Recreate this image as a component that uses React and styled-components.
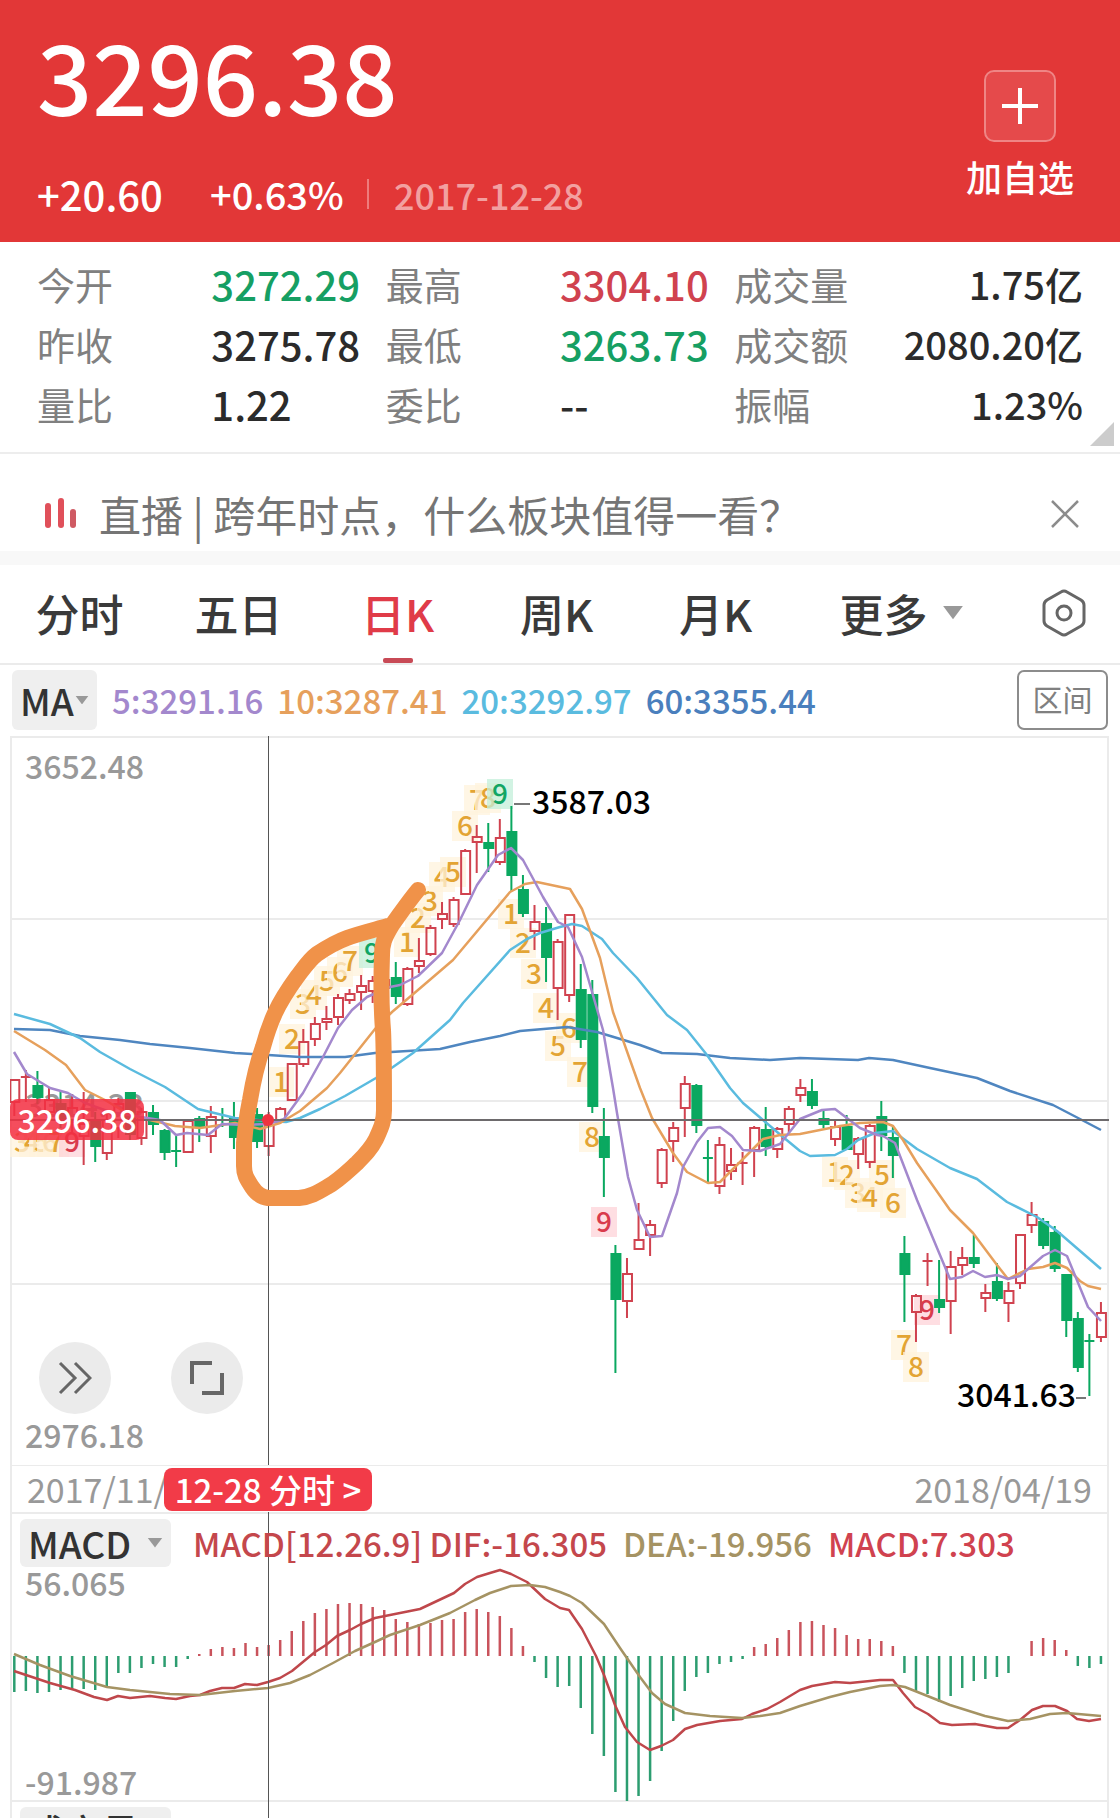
import React from 'react'
import styled, { createGlobalStyle } from 'styled-components'

const RED = '#d0424f';
const GREEN = '#0aa860';

// x of the n-th trading day in chart units
const dayX = (i) => 14.3 + 11.56 * i;

// colour, body top, body bottom, high, low
const candles = [
    ['r', 1080, 1102, 1080, 1116],
    ['r', 1077, 1077, 1070, 1102],
    ['g', 1086, 1097, 1071, 1104],
    ['r', 1100, 1112, 1087, 1120],
    ['g', 1104, 1118, 1090, 1128],
    ['r', 1108, 1122, 1094, 1132],
    ['r', 1124, 1136, 1092, 1165],
    ['g', 1122, 1146, 1112, 1162],
    ['r', 1120, 1153, 1112, 1160],
    ['r', 1104, 1128, 1098, 1138],
    ['g', 1093, 1134, 1093, 1140],
    ['r', 1112, 1138, 1108, 1145],
    ['g', 1113, 1124, 1105, 1135],
    ['g', 1131, 1152, 1129, 1160],
    ['g', 1151, 1151, 1135, 1167],
    ['r', 1121, 1152, 1120, 1153],
    ['g', 1119, 1127, 1116, 1142],
    ['r', 1117, 1136, 1106, 1153],
    ['g', 1120, 1120, 1108, 1127],
    ['g', 1119, 1137, 1102, 1149],
    ['r', 1120, 1132, 1112, 1140],
    ['g', 1115, 1141, 1108, 1148],
    ['r', 1125, 1146, 1112, 1156],
    ['r', 1109, 1122, 1107, 1124],
    ['r', 1064, 1100, 1064, 1100],
    ['r', 1042, 1064, 1029, 1067],
    ['r', 1024, 1039, 1017, 1046],
    ['r', 1019, 1022, 1006, 1030],
    ['r', 998, 1017, 994, 1025],
    ['r', 994, 1000, 989, 1004],
    ['r', 986, 992, 975, 1010],
    ['r', 981, 991, 976, 1003],
    ['r', 980, 988, 974, 996],
    ['g', 978, 996, 962, 1004],
    ['r', 969, 1004, 967, 1006],
    ['r', 961, 966, 938, 973],
    ['r', 928, 954, 925, 956],
    ['r', 914, 919, 902, 929],
    ['r', 900, 924, 897, 927],
    ['r', 851, 894, 849, 895],
    ['r', 837, 842, 825, 873],
    ['g', 843, 848, 823, 872],
    ['r', 838, 862, 819, 865],
    ['g', 832, 875, 806, 891],
    ['g', 890, 913, 875, 917],
    ['r', 922, 931, 905, 950],
    ['g', 924, 957, 907, 982],
    ['r', 942, 988, 939, 1020],
    ['r', 915, 995, 915, 1002],
    ['g', 990, 1039, 964, 1048],
    ['g', 995, 1106, 980, 1113],
    ['g', 1137, 1157, 1108, 1197],
    ['g', 1254, 1299, 1245, 1373],
    ['r', 1274, 1301, 1258, 1318],
    ['r', 1240, 1249, 1203, 1249],
    ['r', 1225, 1235, 1220, 1256],
    ['r', 1150, 1183, 1148, 1188],
    ['r', 1128, 1141, 1122, 1162],
    ['r', 1084, 1108, 1076, 1137],
    ['g', 1086, 1125, 1084, 1133],
    ['g', 1158, 1158, 1140, 1183],
    ['r', 1145, 1186, 1137, 1194],
    ['r', 1165, 1171, 1148, 1180],
    ['r', 1163, 1163, 1152, 1185],
    ['r', 1128, 1150, 1126, 1177],
    ['g', 1130, 1146, 1107, 1156],
    ['r', 1129, 1149, 1127, 1158],
    ['r', 1109, 1124, 1106, 1133],
    ['r', 1088, 1095, 1079, 1102],
    ['g', 1092, 1105, 1079, 1109],
    ['g', 1119, 1124, 1111, 1128],
    ['r', 1127, 1139, 1120, 1146],
    ['g', 1127, 1149, 1115, 1149],
    ['r', 1139, 1154, 1137, 1169],
    ['r', 1126, 1162, 1124, 1168],
    ['g', 1117, 1135, 1101, 1151],
    ['g', 1138, 1155, 1125, 1178],
    ['g', 1254, 1274, 1236, 1322],
    ['r', 1296, 1312, 1294, 1342],
    ['r', 1261, 1261, 1253, 1286],
    ['g', 1300, 1307, 1260, 1313],
    ['r', 1267, 1301, 1251, 1334],
    ['r', 1258, 1265, 1247, 1275],
    ['g', 1258, 1263, 1235, 1268],
    ['r', 1293, 1298, 1284, 1312],
    ['g', 1282, 1298, 1263, 1301],
    ['r', 1291, 1303, 1282, 1322],
    ['r', 1235, 1283, 1235, 1289],
    ['r', 1215, 1225, 1202, 1233],
    ['g', 1222, 1245, 1218, 1249],
    ['g', 1233, 1268, 1226, 1272],
    ['g', 1275, 1320, 1274, 1337],
    ['g', 1319, 1367, 1312, 1372],
    ['g', 1341, 1341, 1334, 1396],
    ['r', 1313, 1337, 1302, 1342],
];

const averages = [
    {
        color: '#4f86c0',
        points: '14,1029 50,1030 80,1036 120,1040 150,1044 190,1048 235,1053 268,1055 300,1057 345,1057 375,1053 440,1049 470,1042 500,1036 520,1031 567,1027 597,1032 617,1038 640,1045 662,1053 697,1054 730,1058 770,1060 800,1058 858,1060 869,1058 893,1060 930,1068 977,1078 1010,1091 1053,1105 1080,1119 1101,1130',
    },
    {
        color: '#5abbdf',
        points: '14,1014 50,1024 80,1038 100,1052 130,1069 165,1087 198,1109 235,1118 268,1121 286,1122 300,1118 320,1109 345,1096 376,1078 393,1067 413,1053 450,1020 463,1003 510,950 527,939 540,933 560,927 572,924 582,926 602,939 613,953 637,978 667,1015 687,1030 707,1055 730,1088 743,1103 763,1120 783,1137 800,1151 810,1156 835,1155 847,1149 858,1140 875,1133 893,1131 917,1149 950,1168 977,1179 1007,1202 1037,1217 1057,1231 1101,1269',
    },
    {
        color: '#e6a05c',
        points: '14,1031 45,1050 66,1065 85,1090 105,1100 130,1115 150,1120 175,1126 200,1128 235,1123 260,1129 280,1123 300,1111 327,1088 340,1073 375,1029 392,1012 418,990 453,960 510,892 525,884 537,882 570,889 582,909 600,958 613,1012 640,1088 652,1118 673,1153 687,1172 708,1183 720,1182 732,1170 747,1155 763,1139 780,1135 800,1134 820,1130 840,1126 860,1123 883,1122 893,1126 903,1140 917,1163 950,1210 973,1233 997,1265 1008,1279 1028,1269 1043,1267 1055,1263 1067,1268 1080,1281 1088,1286 1101,1289',
    },
    {
        color: '#a388cd',
        points: '14,1052 27,1074 50,1088 68,1093 85,1103 110,1112 160,1120 176,1135 187,1133 208,1135 222,1124 245,1125 268,1124 284,1119 303,1093 323,1057 338,1028 352,1010 367,997 390,987 400,985 418,976 442,953 460,920 477,885 498,855 511,848 523,860 543,897 558,922 568,927 582,957 603,1030 613,1088 617,1113 628,1177 637,1210 650,1237 662,1236 677,1193 683,1167 697,1142 708,1128 720,1127 732,1136 743,1150 760,1151 780,1144 800,1119 822,1110 835,1109 860,1128 877,1135 883,1136 895,1143 917,1200 950,1279 962,1277 973,1271 985,1277 997,1275 1008,1279 1020,1276 1043,1256 1055,1250 1067,1256 1088,1307 1101,1321',
    },
];

// digit, centre x, centre y, kind
const marks = [
    ['3', 22, 1142], ['4', 32, 1142],
    ['5', 42, 1142], ['6', 50, 1142], ['7', 56, 1142], ['9', 72, 1142, 'low'],
    ['1', 281, 1082], ['2', 292, 1039], ['3', 303, 1004], ['4', 314, 995],
    ['5', 327, 981], ['6', 340, 972], ['7', 350, 961], ['9', 372, 953, 'high'],
    ['1', 407, 942], ['2', 418, 918], ['3', 430, 901], ['4', 442, 877],
    ['5', 453, 872], ['6', 465, 826], ['7', 477, 800], ['8', 488, 798], ['9', 500, 794, 'high'],
    ['1', 511, 914], ['2', 523, 943], ['3', 534, 974], ['4', 546, 1008],
    ['5', 558, 1046], ['6', 569, 1028], ['7', 580, 1072], ['8', 592, 1137], ['9', 604, 1222, 'low'],
    ['1', 835, 1172], ['2', 847, 1175], ['3', 858, 1193], ['4', 870, 1197],
    ['5', 882, 1175], ['6', 893, 1203], ['7', 904, 1345], ['8', 916, 1367], ['9', 927, 1310, 'low'],
];

const markColors = {
    count: { text: '#e3a434', back: '#fff3dc' },
    high: { text: '#12a564', back: '#c3efd9' },
    low: { text: '#d93b4c', back: '#fdd3d8' },
};

// end of every MACD bar, the zero line is at 1656
const macdBars = [
    1692, 1691, 1693, 1692, 1690, 1689, 1689, 1690, 1686, 1673, 1673, 1668, 1664, 1667, 1667, 1659,
    1654, 1649, 1647, 1648, 1643, 1647, 1645, 1640, 1631, 1621, 1613, 1609, 1604, 1603, 1604, 1607,
    1610, 1619, 1622, 1624, 1623, 1620, 1619, 1612, 1609, 1612, 1616, 1628, 1646, 1662, 1678, 1687,
    1686, 1708, 1734, 1756, 1792, 1801, 1796, 1781, 1751, 1721, 1691, 1677, 1673, 1664, 1662, 1659,
    1647, 1644, 1638, 1630, 1622, 1621, 1625, 1628, 1635, 1639, 1639, 1641, 1646, 1673, 1691, 1694,
    1702, 1696, 1688, 1681, 1679, 1677, 1673, 1656, 1641, 1638, 1640, 1650, 1666, 1668, 1664,
];

const difPoints = '14,1671 26,1675 50,1683 75,1690 94,1697 107,1700 118,1696 130,1698 150,1696 165,1698 176,1699 190,1696 200,1695 210,1691 222,1688 234,1688 245,1684 257,1685 268,1682 280,1678 292,1671 315,1652 326,1645 337,1636 350,1630 361,1624 375,1618 395,1614 420,1609 437,1601 454,1593 465,1584 477,1577 490,1573 500,1570 511,1574 527,1582 545,1599 560,1608 569,1610 582,1629 596,1656 604,1675 615,1705 625,1727 637,1742 650,1750 661,1746 673,1740 685,1729 697,1725 720,1721 742,1719 752,1714 767,1709 780,1702 800,1690 812,1686 835,1682 850,1683 870,1681 880,1680 893,1680 903,1693 915,1707 928,1714 940,1723 952,1725 975,1724 997,1728 1008,1728 1020,1720 1032,1710 1043,1706 1055,1706 1067,1711 1077,1719 1089,1721 1101,1719';
const deaPoints = '14,1654 40,1665 70,1676 107,1687 130,1690 170,1694 200,1695 235,1691 268,1688 290,1683 310,1675 333,1663 355,1651 375,1642 390,1635 420,1625 450,1613 475,1600 490,1593 511,1586 530,1585 545,1587 560,1592 570,1596 582,1603 604,1624 620,1648 640,1677 652,1693 665,1704 685,1713 710,1716 742,1718 760,1716 780,1713 800,1706 830,1697 850,1692 880,1686 893,1685 905,1687 930,1697 950,1705 985,1716 1008,1721 1030,1719 1050,1714 1067,1713 1101,1716';

const stats = [
    ['今开', '3272.29', 'down', '最高', '3304.10', 'up', '成交量', '1.75亿'],
    ['昨收', '3275.78', '', '最低', '3263.73', 'down', '成交额', '2080.20亿'],
    ['量比', '1.22', '', '委比', '--', '', '振幅', '1.23%'],
];

const maValues = [
    ['5:3291.16', '#a388cd'],
    ['10:3287.41', '#e6a05c'],
    ['20:3292.97', '#5abbdf'],
    ['60:3355.44', '#4a7fbd'],
];

const Candle = ({ x, data }) => {
    const [kind, top, bottom, high, low] = data;
    const color = kind === 'r' ? RED : GREEN;
    return (
        <g stroke={color} strokeWidth="2" fill="none">
            <path d={`M${x} ${high}V${top}M${x} ${bottom}V${low}`} />
            {top === bottom
                ? <path d={`M${x - 5} ${top}H${x + 5}`} />
                : <rect x={x - 4} y={top} width="9" height={bottom - top} fill={kind === 'g' ? color : 'none'} />}
        </g>
    )
}

const Mark = ({ digit, x, y, kind = 'count' }) => (
    <g>
        <rect x={x - 13} y={y - 15} width="26" height="30" fill={markColors[kind].back} opacity="0.75" />
        <MarkText x={x} y={y + 10} fill={markColors[kind].text}>{digit}</MarkText>
    </g>
)

const Caret = ({ size }) => (
    <CaretIcon viewBox="0 0 20 12" width={size} aria-hidden="true">
        <path d="M1 0H19L10 12Z" fill="#999" />
    </CaretIcon>
)

const PriceChart = () => (
    <ChartSvg viewBox="10 736 1099 729">
        <g stroke="#ebebeb" strokeWidth="2" fill="none">
            <path d="M10 737H1109M10 919H1109M10 1101H1109M10 1284H1109" />
            <path d="M11 736V1465M1108 736V1465" />
        </g>
        <GhostText x="25" y="1117">3314.33</GhostText>
        {marks.map(([digit, x, y, kind], i) => <Mark key={i} digit={digit} x={x} y={y} kind={kind} />)}
        {candles.map((c, i) => <Candle key={i} x={dayX(i)} data={c} />)}
        {averages.map(a => (
            <polyline key={a.color} points={a.points} fill="none" stroke={a.color} strokeWidth="2.5" strokeLinejoin="round" />
        ))}
        <path d="M514 804H530M1076 1398H1086" stroke="#777" strokeWidth="2" />
        <ExtremeText x="532" y="814">3587.03</ExtremeText>
        <ExtremeText x="957" y="1407">3041.63</ExtremeText>
        <path d="M10 1120H1109" stroke="#6d6a6c" strokeWidth="2" />
        <path d="M268.5 736V1465" stroke="#555" />
        <circle cx="268" cy="1120" r="6" fill="#ee3340" />
        <path
            d="M418 890C408 902 400 914 392 925C384 938 382 944 382 955C381 985 381 1005 383 1030C384 1050 384 1080 384 1110C384 1122 381 1128 376 1139C371 1149 365 1155 357 1163C347 1172 338 1181 327 1187C317 1193 310 1197 299 1198H268C260 1197 256 1193 252 1187C247 1179 244 1175 244 1166V1143C245 1128 247 1115 250 1100C253 1082 257 1064 263 1047C266 1036 270 1024 275 1013C281 1000 289 988 297 977C304 968 309 960 317 954C326 948 336 942 347 938C361 933 374 930 388 926"
            fill="none"
            stroke="#f09249"
            strokeWidth="16"
            strokeLinecap="round"
            strokeLinejoin="round"
        />
    </ChartSvg>
)

const MacdChart = () => (
    <ChartSvg viewBox="10 1512 1099 290">
        <g stroke="#ebebeb" strokeWidth="2" fill="none">
            <path d="M10 1513H1109M10 1801H1109M11 1512V1802M1108 1512V1802" />
        </g>
        {macdBars.map((end, i) => (
            <path key={i} d={`M${dayX(i)} 1656V${end}`} stroke={end < 1656 ? '#c9535c' : '#2c9d70'} strokeWidth="2.5" />
        ))}
        <polyline points={difPoints} fill="none" stroke="#bf474b" strokeWidth="2.5" strokeLinejoin="round" />
        <polyline points={deaPoints} fill="none" stroke="#a59363" strokeWidth="2.5" strokeLinejoin="round" />
        <path d="M268.5 1512V1802" stroke="#555" />
    </ChartSvg>
)

class App extends React.Component {
    render() {
        return (
            <Page>
                <GlobalStyle />
                <Header>
                    <div>
                        <Price>3296.38</Price>
                        <Changes>
                            <Change>+20.60</Change>
                            <Change>+0.63%</Change>
                            <DateText>2017-12-28</DateText>
                        </Changes>
                    </div>
                    <AddButton>
                        <AddBox>
                            <svg viewBox="0 0 36 36" width="36" height="36" aria-hidden="true">
                                <path d="M18 0V36M0 18H36" stroke="#fff" strokeWidth="4" />
                            </svg>
                        </AddBox>
                        加自选
                    </AddButton>
                </Header>

                <Stats>
                    <colgroup>
                        <StatCol span="4" />
                        <StatCol $share={14} />
                        <StatCol />
                    </colgroup>
                    <tbody>
                        {stats.map(row => (
                            <tr key={row[0]}>
                                <StatLabel scope="row">{row[0]}</StatLabel>
                                <StatValue $trend={row[2]}>{row[1]}</StatValue>
                                <StatLabel scope="row">{row[3]}</StatLabel>
                                <StatValue $trend={row[5]}>{row[4]}</StatValue>
                                <StatLabel scope="row">{row[6]}</StatLabel>
                                <StatTotal>{row[7]}</StatTotal>
                            </tr>
                        ))}
                    </tbody>
                </Stats>
                <Corner viewBox="0 0 24 24" aria-hidden="true">
                    <path d="M24 0V24H0Z" fill="#ccc" />
                </Corner>

                <Banner>
                    <svg viewBox="0 0 32 32" width="32" height="32" aria-hidden="true">
                        <path d="M4 8V27" stroke="#e0505a" strokeWidth="6" strokeLinecap="round" />
                        <path d="M17 3V27" stroke="#e0505a" strokeWidth="6" strokeLinecap="round" />
                        <path d="M29 14V27" stroke="#cf5a63" strokeWidth="6" strokeLinecap="round" />
                    </svg>
                    <BannerLink href="#live">直播 | 跨年时点，什么板块值得一看？</BannerLink>
                    <PlainButton aria-label="关闭">
                        <svg viewBox="0 0 28 28" width="28" height="28" aria-hidden="true">
                            <path d="M1 1L27 27M27 1L1 27" stroke="#8c8c8c" strokeWidth="2.5" />
                        </svg>
                    </PlainButton>
                </Banner>

                <Tabs>
                    <Tab>分时</Tab>
                    <Tab>五日</Tab>
                    <Tab $active>日K</Tab>
                    <Tab>周K</Tab>
                    <Tab>月K</Tab>
                    <Tab>更多<Caret size={22} /></Tab>
                    <Tab aria-label="设置">
                        <svg viewBox="0 0 44 48" width="44" height="48" aria-hidden="true">
                            <path d="M19 3Q22 1 25 3L39 11Q42 13 42 16V32Q42 35 39 37L25 45Q22 47 19 45L5 37Q2 35 2 32V16Q2 13 5 11Z" fill="none" stroke="#666" strokeWidth="3" />
                            <circle cx="22" cy="24" r="7" fill="none" stroke="#666" strokeWidth="3" />
                        </svg>
                    </Tab>
                </Tabs>

                <MaRow>
                    <Picker $width={85} $height={60}>
                        <PickerSelect aria-label="主图指标"><option>MA</option></PickerSelect>
                        <Caret size={14} />
                    </Picker>
                    <MaValues>
                        {maValues.map(([text, color]) => <Value key={text} $color={color}>{text}</Value>)}
                    </MaValues>
                    <RangeButton>区间</RangeButton>
                </MaRow>

                <Panel>
                    <PriceChart />
                    <AxisLabel>3652.48</AxisLabel>
                    <CrossTag>3296.38</CrossTag>
                    <ChartFoot>
                        <RoundButtons>
                            <RoundButton aria-label="前进">
                                <svg viewBox="0 0 34 34" width="34" height="34" aria-hidden="true">
                                    <path d="M2 2L17 17L2 32M17 2L32 17L17 32" fill="none" stroke="#666" strokeWidth="3" />
                                </svg>
                            </RoundButton>
                            <RoundButton aria-label="全屏">
                                <svg viewBox="0 0 34 34" width="34" height="34" aria-hidden="true">
                                    <path d="M2 23V2H22M32 12V32H12" fill="none" stroke="#666" strokeWidth="4" />
                                </svg>
                            </RoundButton>
                        </RoundButtons>
                        <FootLabel>2976.18</FootLabel>
                    </ChartFoot>
                </Panel>

                <DateRow>
                    <span>2017/11/15</span>
                    <span>2018/04/19</span>
                    <DayButton>12-28 分时 &gt;</DayButton>
                </DateRow>

                <Panel>
                    <MacdChart />
                    <MacdHead>
                        <Picker $width={151} $height={48}>
                            <PickerSelect aria-label="副图指标"><option>MACD</option></PickerSelect>
                            <Caret size={16} />
                        </Picker>
                        <MacdValues>
                            <Value $color="#c4474c">MACD[12.26.9] DIF:-16.305</Value>
                            <Value $color="#a59363">DEA:-19.956</Value>
                            <Value $color="#d0424f">MACD:7.303</Value>
                        </MacdValues>
                    </MacdHead>
                    <MacdTop>56.065</MacdTop>
                    <MacdBottom>-91.987</MacdBottom>
                </Panel>

                <NextPanel>
                    <ChartSvg viewBox="10 1802 1099 16">
                        <path d="M11 1802V1818M1108 1802V1818" stroke="#ebebeb" strokeWidth="2" />
                        <path d="M268.5 1802V1818" stroke="#555" />
                    </ChartSvg>
                    <NextHead>
                        <Picker $width={151} $height={48}>
                            <PickerSelect aria-label="成交指标"><option>成交量</option></PickerSelect>
                        </Picker>
                    </NextHead>
                </NextPanel>
            </Page>
        )
    }
}

const FONT = '"Noto Sans CJK SC", "Noto Sans", sans-serif';

const GlobalStyle = createGlobalStyle`
    body {
        margin: 0;
        background: #fff;
    }
    * {
        box-sizing: border-box;
    }
    button, select {
        font: inherit;
        color: inherit;
        padding: 0;
        border: 0;
        background: none;
    }
`;

const Page = styled.main`
    font-family: ${FONT};
    font-weight: 500;
    color: #2b2b2b;
    overflow: hidden;
`;

const Header = styled.header`
    display: flex;
    justify-content: space-between;
    padding: 14px 46px 14px 37px;
    height: 242px;
    background: #e23737;
    color: #fff;
`;

const Price = styled.div`
    font-size: 97px;
    line-height: 120px;
`;

const Changes = styled.div`
    display: flex;
    align-items: center;
    margin-top: 38px;
    line-height: 44px;
`;

const Change = styled.span`
    width: 173px;
    font-size: 40px;

    & + & {
        width: 157px;
        font-size: 38px;
    }
`;

const DateText = styled.time`
    padding-left: 25px;
    border-left: 2px solid #ee7c7c;
    font-size: 36px;
    line-height: 30px;
    color: #f2a0a0;
`;

const AddButton = styled.button`
    display: flex;
    flex-direction: column;
    align-items: center;
    align-self: center;
    gap: 12px;
    margin-top: 26px;
    font-size: 36px;
    line-height: 44px;
    cursor: pointer;
`;

const AddBox = styled.span`
    display: flex;
    align-items: center;
    justify-content: center;
    width: 72px;
    height: 72px;
    border: 2px solid #ef8585;
    border-radius: 10px;
    background: #e54a4b;
`;

const Stats = styled.table`
    table-layout: fixed;
    width: calc(100% - 74px);
    margin: 12px 37px 0;
    border-collapse: collapse;
    line-height: 60px;
    white-space: nowrap;

    th, td {
        padding: 0;
        height: 60px;
    }
`;

const StatCol = styled.col`
    width: ${props => props.$share ? `${props.$share}%` : 'auto'};

    &:first-child {
        width: 16.6667%;
    }
`;

const StatLabel = styled.th`
    font-size: 38px;
    font-weight: 400;
    text-align: left;
    color: #808080;
`;

const trendColors = { up: '#d0424f', down: '#169f63' };

const StatValue = styled.td`
    font-size: 40px;
    color: ${props => trendColors[props.$trend] || '#2b2b2b'};
`;

const StatTotal = styled.td`
    font-size: 38px;
    text-align: right;
`;

const Corner = styled.svg`
    display: block;
    width: 24px;
    height: 24px;
    margin: -12px 6px 6px auto;
`;

const Banner = styled.section`
    display: flex;
    align-items: center;
    height: 113px;
    padding: 22px 41px 0 44px;
    border-top: 2px solid #ededed;
    border-bottom: 14px solid #f8f8f8;
`;

const BannerLink = styled.a`
    flex: 1;
    margin-left: 23px;
    font-size: 42px;
    font-weight: 400;
    line-height: 56px;
    color: #757575;
    text-decoration: none;
`;

const PlainButton = styled.button`
    display: flex;
    cursor: pointer;
`;

const Tabs = styled.nav`
    display: grid;
    grid-template-columns: repeat(5, 159fr) 213fr 112fr;
    height: 100px;
    border-bottom: 2px solid #ebebeb;
`;

const Tab = styled.button`
    position: relative;
    display: flex;
    align-items: center;
    justify-content: center;
    gap: 14px;
    padding-bottom: 2px;
    font-size: 44px;
    line-height: 60px;
    color: ${props => props.$active ? '#e03b48' : '#3a3a3a'};
    cursor: pointer;

    &::after {
        content: '';
        display: ${props => props.$active ? 'block' : 'none'};
        position: absolute;
        bottom: 0;
        left: calc(50% - 15px);
        width: 30px;
        height: 5px;
        border-radius: 2px;
        background: #c84a56;
    }
`;

const CaretIcon = styled.svg`
    flex: none;
    pointer-events: none;
`;

const MaRow = styled.div`
    display: flex;
    align-items: center;
    height: 71px;
    padding: 0 12px 1px;
`;

const Picker = styled.label`
    display: flex;
    align-items: center;
    flex: none;
    width: ${props => props.$width}px;
    height: ${props => props.$height}px;
    padding: 0 8px;
    border-radius: 6px;
    background: #efefef;
`;

const PickerSelect = styled.select`
    appearance: none;
    flex: 1;
    min-width: 0;
    font-size: 37px;
    line-height: 48px;
    color: #333;
`;

const MaValues = styled.div`
    display: flex;
    flex: 1;
    gap: 14px;
    margin-left: 15px;
`;

const Value = styled.span`
    font-size: 33px;
    line-height: 48px;
    white-space: nowrap;
    color: ${props => props.$color};
`;

const RangeButton = styled.button`
    width: 91px;
    height: 60px;
    padding-bottom: 4px;
    border: 2px solid #8c8c8c;
    border-radius: 7px;
    font-size: 30px;
    font-weight: 400;
    color: #808080;
    cursor: pointer;
`;

const Panel = styled.section`
    position: relative;
    margin: 0 11px 0 10px;
`;

const ChartSvg = styled.svg`
    display: block;
    width: 100%;
    height: auto;
    font-family: ${FONT};
`;

const MarkText = styled.text`
    font-size: 28px;
    text-anchor: middle;
`;

const GhostText = styled.text`
    font-size: 32px;
    fill: #999;
`;

const ExtremeText = styled.text`
    font-size: 32px;
    fill: #000;
`;

const AxisLabel = styled.span`
    position: absolute;
    top: 9px;
    left: 15px;
    font-size: 32px;
    line-height: 40px;
    color: #999;
`;

const CrossTag = styled.span`
    position: absolute;
    top: calc(50% - 2px);
    left: 0;
    width: 134px;
    border-radius: 8px;
    font-size: 32px;
    line-height: 41px;
    text-align: center;
    color: #fff;
    background: rgba(243, 48, 66, 0.86);
`;

const ChartFoot = styled.div`
    position: absolute;
    left: 15px;
    bottom: 11px;
`;

const RoundButtons = styled.div`
    display: flex;
    gap: 60px;
    margin-left: 14px;
`;

const RoundButton = styled.button`
    display: flex;
    align-items: center;
    justify-content: center;
    width: 72px;
    height: 72px;
    border-radius: 50%;
    background: #ebebeb;
    cursor: pointer;
`;

const FootLabel = styled.span`
    font-size: 32px;
    line-height: 40px;
    color: #999;
`;

const DateRow = styled.div`
    position: relative;
    display: flex;
    justify-content: space-between;
    margin: 0 11px 0 10px;
    padding: 0 15px;
    border: solid #ebebeb;
    border-width: 1px 2px 0;
    font-size: 34px;
    font-weight: 400;
    line-height: 46px;
    color: #999;
`;

const DayButton = styled.button`
    position: absolute;
    top: 2px;
    left: 152px;
    width: 208px;
    height: 43px;
    border-radius: 8px;
    font-size: 33px;
    font-weight: 500;
    line-height: 43px;
    white-space: nowrap;
    color: #fff;
    background: #f23b48;
    cursor: pointer;
`;

const MacdHead = styled.div`
    position: absolute;
    top: 7px;
    left: 10px;
    display: flex;
    align-items: center;
`;

const MacdValues = styled.div`
    display: flex;
    gap: 16px;
    margin-left: 22px;
`;

const MacdTop = styled(AxisLabel)`
    top: 50px;
`;

const MacdBottom = styled(AxisLabel)`
    top: auto;
    bottom: 1px;
`;

const NextPanel = styled(Panel)`
    overflow: hidden;
`;

const NextHead = styled.div`
    position: absolute;
    top: 5px;
    left: 10px;
`;

export default App;
